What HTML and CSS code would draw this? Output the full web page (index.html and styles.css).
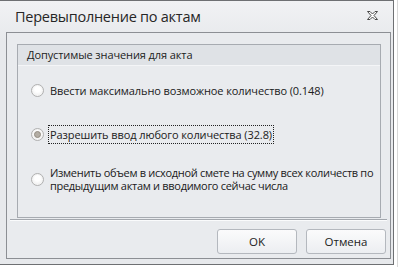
FILE: index.html
```html
<!DOCTYPE html>
<html lang="ru">
<head>
<meta charset="utf-8">
<link rel="stylesheet" href="styles.css">
</head>
<body>
<div class="screen">
  <div class="window">
    <div class="titlebar">
      <span class="title">Перевыполнение по актам</span>
      <svg class="close" width="11" height="9" viewBox="0 0 11 9">
        <path d="M0.5 0.5 H3 L5.5 3 L8 0.5 H10.5 L7 4.5 L10.5 8.5 H8 L5.5 6 L3 8.5 H0.5 L4 4.5 Z" fill="#fff" stroke="#4a4a4a" stroke-width="1" stroke-linejoin="round"/>
      </svg>
    </div>
    <div class="panel">
      <div class="group">
        <div class="group-head">Допустимые значения для акта</div>
        <div class="options">
          <label class="option opt1">
            <span class="radio"></span>
            <span class="label">Ввести максимально возможное количество (0.148)</span>
          </label>
          <label class="option opt2">
            <span class="radio checked"><span class="dot"></span></span>
            <span class="label focused">Разрешить ввод любого количества (32.8)</span>
          </label>
          <label class="option opt3">
            <span class="radio"></span>
            <span class="label">Изменить объем в исходной смете на сумму всех количеств по предыдущим актам и вводимого сейчас числа</span>
          </label>
        </div>
      </div>
      <div class="separator"></div>
      <div class="buttons">
        <button class="btn">OK</button>
        <button class="btn">Отмена</button>
      </div>
    </div>
  </div>
  <div class="right-strip"></div>
</div>
</body>
</html>
```
FILE: styles.css
```css
html, body {
  margin: 0;
  padding: 0;
  background: #ffffff;
}
body {
  width: 399px;
  height: 267px;
  overflow: hidden;
  font-family: "Open Sans", "Noto Sans", sans-serif;
  color: #202020;
}
.screen {
  display: flex;
  height: 267px;
}
.window {
  width: 393px;
  height: 263px;
  border-top: 1px solid #6e7073;
  border-right: 1px solid #6e7073;
  border-bottom: 1px solid #6e7073;
  background: linear-gradient(#f1f2f4, #e7e9ec 40px, #e7e9ec);
  display: flex;
  flex-direction: column;
}
.right-strip {
  width: 5px;
  border-right: 1px solid #d8d8d8;
  margin-right: 1px;
}
.titlebar {
  height: 31px;
  display: flex;
  align-items: center;
  justify-content: space-between;
  padding: 0 15px 0 15px;
  box-sizing: border-box;
}
.title {
  font-size: 14.5px;
  letter-spacing: -0.25px;
  color: #262626;
}
.close {
  display: block;
  margin-top: -2px;
}
.panel {
  margin: 0 2px 5px 6px;
  flex: 1;
  border: 1px solid #8c8f94;
  background: #e9ebee;
  display: flex;
  flex-direction: column;
  padding: 11px 9px 0 10px;
}
.group {
  height: 174px;
  border: 1px solid #a7abb1;
  box-sizing: border-box;
  display: flex;
  flex-direction: column;
}
.group-head {
  height: 20px;
  background: #dfe2e6;
  border-bottom: 1px solid #f4f5f7;
  font-size: 11px;
  letter-spacing: -0.1px;
  line-height: 20px;
  padding-left: 9px;
  color: #222;
}
.options {
  flex: 1;
  font-size: 11px;
  letter-spacing: -0.1px;
}
.option {
  display: flex;
  align-items: center;
  margin-left: 13px;
}
.opt1 { margin-top: 16px; }
.opt2 { margin-top: 27px; }
.opt3 { margin-top: 21px; }
.radio {
  width: 11px;
  height: 11px;
  border-radius: 50%;
  border: 1px solid #b0b0b0;
  background: radial-gradient(circle at 50% 40%, #ffffff 30%, #e6e6e6 100%);
  box-shadow: inset 0 0 0 1px #f4f4f4;
  flex: none;
  display: flex;
  align-items: center;
  justify-content: center;
  margin-right: 5px;
}
.radio.checked .dot {
  width: 5px;
  height: 5px;
  border-radius: 50%;
  background: #b3ada4;
  border: 1px solid #938c82;
}
.label {
  line-height: 13px;
  padding: 2px 1px;
}
.label.focused {
  outline: 1px dotted #222;
  outline-offset: 0;
}
.opt3 .label {
  width: 332px;
  letter-spacing: -0.3px;
}
.separator {
  margin: 1px -6px 0 -7px;
  height: 1px;
  background: #a3a7ad;
  border-bottom: 1px solid #fafbfc;
}
.buttons {
  display: flex;
  justify-content: flex-end;
  gap: 9px;
  margin-top: 8px;
  margin-right: -5px;
}
.btn {
  width: 80px;
  height: 25px;
  border: 1px solid #b4b8be;
  border-radius: 3px;
  background: linear-gradient(#fbfbfc, #eceef1);
  font-family: "Open Sans", "Noto Sans", sans-serif;
  font-size: 11.5px;
  color: #222;
  padding: 0;
}
```
